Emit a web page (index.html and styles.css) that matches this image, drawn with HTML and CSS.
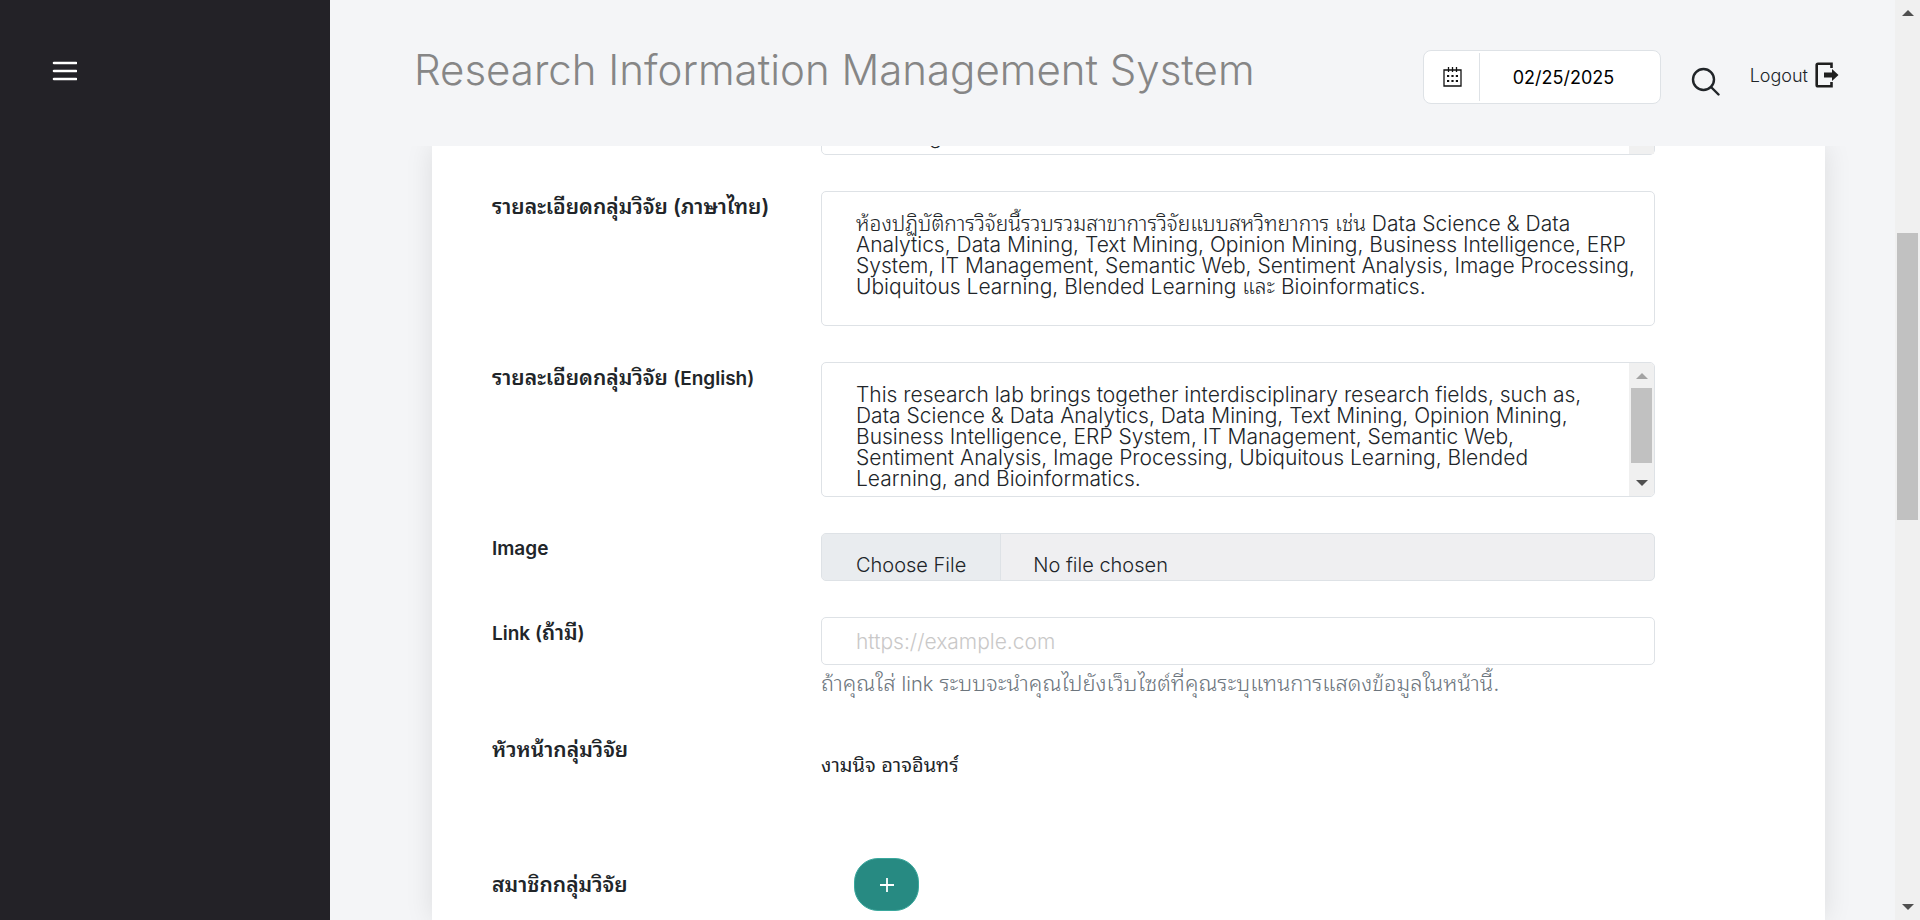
FILE: index.html
```html
<!DOCTYPE html>
<html lang="th">
<head>
<meta charset="utf-8">
<title>Research Information Management System</title>
<link rel="stylesheet" href="styles.css">
</head>
<body>
<div class="page">
  <aside class="sidebar">
    <button class="menu-toggle" type="button" aria-label="Toggle menu">
      <svg width="26" height="22" viewBox="0 0 26 22"><path d="M3 3h22M3 11h22M3 19h22" stroke="#fff" stroke-width="2.6" stroke-linecap="round"/></svg>
    </button>
  </aside>
  <div class="main">
    <header class="topbar">
      <h1 class="title">Research Information Management System</h1>
      <div class="tools">
        <div class="date">
          <span class="date-icon">
            <svg width="19" height="20" viewBox="0 0 19 20" fill="none" stroke="#111"><path d="M1 3h17v16H1zM5.500 0v5M13.500 0v5M9.500 0v5" stroke-width="1.300"/><path d="M4 9h2.200M8.400 9h2.200M12.800 9h2.200M4 14h2.200M8.400 14h2.200M12.800 14h2.200" stroke-width="2.200"/></svg>
          </span>
          <input class="date-input" type="text" value="02/25/2025" aria-label="Date">
        </div>
        <button class="search" type="button" aria-label="Search">
          <svg width="29" height="29" viewBox="0 0 29 29" fill="none" stroke="#212529" stroke-width="2.400" stroke-linecap="round"><circle cx="12.500" cy="12.500" r="10.500"/><path d="M20 20l7.500 7.500"/></svg>
        </button>
        <a class="logout" href="#">Logout
          <svg width="24" height="26" viewBox="0 0 24 26"><path d="M16.500 6V1.700H3Q1.700 1.700 1.700 3v20q0 1.300 1.300 1.300h13.500V20" fill="none" stroke="#1f1f1f" stroke-width="2.600"/><path d="M9 10.500h8V7l6.500 6-6.500 6v-3.500H9z" fill="#1f1f1f"/></svg>
        </a>
      </div>
    </header>
    <main class="content">
      <form class="card">
        <div class="clip"><textarea class="control clipped" aria-label="ชื่อกลุ่มวิจัย">Learning</textarea><span class="clip-track"></span></div>
        <div class="row">
          <label class="label thai" for="detail-th">รายละเอียดกลุ่มวิจัย (ภาษาไทย)</label>
          <div class="field"><textarea class="control area" id="detail-th">ห้องปฏิบัติการวิจัยนี้รวบรวมสาขาการวิจัยแบบสหวิทยาการ เช่น Data Science &amp; Data
Analytics, Data Mining, Text Mining, Opinion Mining, Business Intelligence, ERP
System, IT Management, Semantic Web, Sentiment Analysis, Image Processing,
Ubiquitous Learning, Blended Learning และ Bioinformatics.</textarea></div>
        </div>
        <div class="row">
          <label class="label thai" for="detail-en">รายละเอียดกลุ่มวิจัย <span class="latin">(English)</span></label>
          <div class="field"><textarea class="control area" id="detail-en">This research lab brings together interdisciplinary research fields, such as,
Data Science &amp; Data Analytics, Data Mining, Text Mining, Opinion Mining,
Business Intelligence, ERP System, IT Management, Semantic Web,
Sentiment Analysis, Image Processing, Ubiquitous Learning, Blended
Learning, and Bioinformatics.</textarea>
            <div class="scroll scroll-field"><i class="up dim"></i><i class="thumb"></i><i class="down"></i></div>
          </div>
        </div>
        <div class="row">
          <label class="label" for="image">Image</label>
          <div class="field"><input class="control file" type="file" id="image"></div>
        </div>
        <div class="row">
          <label class="label thai" for="link"><span class="latin">Link (</span>ถ้ามี<span class="latin">)</span></label>
          <div class="field"><input class="control line" type="url" id="link" placeholder="https://example.com">
            <small class="help">ถ้าคุณใส่ <span class="latin">link</span> ระบบจะนำคุณไปยังเว็บไซต์ที่คุณระบุแทนการแสดงข้อมูลในหน้านี้.</small></div>
        </div>
        <div class="row head">
          <span class="label thai">หัวหน้ากลุ่มวิจัย</span>
          <div class="field"><p class="person">งามนิจ อาจอินทร์</p></div>
        </div>
        <div class="row members">
          <span class="label thai">สมาชิกกลุ่มวิจัย</span>
          <div class="field"><button class="add" type="button" aria-label="Add member"><svg width="16" height="16" viewBox="0 0 16 16"><path d="M8 1v14M1 8h14" stroke="#fff" stroke-width="1.800"/></svg></button></div>
        </div>
      </form>
    </main>
  </div>
  <div class="scroll scroll-page"><i class="up"></i><i class="thumb"></i><i class="down"></i></div>
</div>
</body>
</html>
```
FILE: styles.css
```css
* { box-sizing: border-box; }
body {
  margin: 0;
  font-family: Inter, "Noto Sans Thai Looped", "Noto Looped Thai", Loma, Waree, Garuda, "Noto Sans Thai", sans-serif;
  color: #212529;
  background: #f4f5f7;
}
.page { display: flex; height: 100vh; overflow: hidden; }
.sidebar { flex: 0 0 330px; background: #232227; padding: 60px 51px; }
button { font: inherit; cursor: pointer; }
.menu-toggle { display: flex; padding: 0; border: 0; background: none; }
.main { flex: 1; min-width: 0; display: flex; flex-direction: column; }
.topbar {
  flex: 0 0 146px;
  display: flex;
  justify-content: space-between;
  align-items: flex-start;
  padding: 40px 56px 0 84px;
}
.title { margin: 0; font-size: 42px; line-height: 60px; font-weight: 300; color: #868686; white-space: nowrap; }
.tools { display: flex; align-items: center; padding-top: 10px; }
.date {
  display: flex;
  width: 238px;
  height: 54px;
  padding: 2px;
  background: #fff;
  border: 1px solid #dee2e6;
  border-radius: 8px;
}
.date-icon { flex: 0 0 54px; display: flex; align-items: center; justify-content: center; border-right: 1px solid #dee2e6; }
.date-input { flex: 1; min-width: 0; padding: 0 0 0 33px; border: 0; background: none; font: 400 18px Inter, sans-serif; color: #000; }
.search { display: flex; margin: 8px 30px 0 30px; padding: 0; border: 0; background: none; }
.logout { display: flex; align-items: center; gap: 7px; padding-bottom: 4px; font-size: 18px; font-weight: 300; color: #212529; text-decoration: none; }
.content { flex: 1; min-height: 0; overflow: hidden; padding: 0 70px 0 102px; }
.card {
  display: flex;
  flex-direction: column;
  gap: 36px;
  min-height: 100%;
  padding: 0 170px 0 60px;
  background: #fff;
  box-shadow: 0 0 26px rgba(0, 0, 0, .1);
}
.row { display: grid; grid-template-columns: 329px 1fr; }
.label { padding-top: 3px; font-size: 19px; line-height: 26px; font-weight: 600; }
.thai { font-size: 21px; white-space: nowrap; }
.label .latin { font-size: 19px; }
.field { position: relative; min-width: 0; }
.control {
  display: block;
  width: 100%;
  border: 1px solid #dee2e6;
  border-radius: 5px;
  background: #fff;
  color: #212529;
  font-family: inherit;
  font-size: 21px;
  line-height: 21px;
  font-weight: 300;
  resize: none;
  overflow: hidden;
}
.area { height: 135px; padding: 21px 10px 0 34px; white-space: pre; }
.clip { position: relative; display: flex; align-items: flex-end; height: 9px; margin-left: 329px; overflow: hidden; }
.clipped { flex: none; height: 60px; padding: 30px 34px 0; }
.clip-track { position: absolute; right: 1px; bottom: 1px; width: 25px; height: 8px; background: #f0f0f0; }
.file { height: 48px; padding: 0; background: #efeff1; line-height: 62px; font-size: 20px; }
.file::file-selector-button {
  height: 62px;
  margin: 0 32px 0 0;
  padding: 0 34px;
  border: 0;
  border-right: 1px solid #dee2e6;
  background: #e9ecef;
  color: #212529;
  font: inherit;
}
.line { height: 48px; padding: 0 34px; }
.line::placeholder { color: #c9c8c8; }
.help { display: block; margin-top: 4px; font-size: 22px; line-height: 28px; font-weight: 300; color: #6c757d; }
.help .latin { font-size: 20px; }
.head { height: 88px; }
.person { margin: 19px 0 0; font-size: 20px; line-height: 24px; }
.members { align-items: center; }
.members .label { padding: 0; }
.add {
  display: flex;
  align-items: center;
  justify-content: center;
  width: 65px;
  height: 53px;
  margin-left: 33px;
  border: 1px solid #3aa89d;
  border-radius: 24px;
  background: #278a82;
}
.scroll { display: flex; flex-direction: column; align-items: center; background: #f0f0f0; }
.up, .down { border: 6px solid transparent; border-top-width: 0; border-bottom: 6px solid #505050; }
.down { border-top: 6px solid #505050; border-bottom-width: 0; margin-top: auto; }
.dim { border-bottom-color: #a3a3a3; }
.thumb { width: 21px; background: #c1c1c1; }
.scroll-page { flex: 0 0 25px; padding: 10px 0; }
.scroll-page .thumb { height: 287px; margin-top: 217px; }
.scroll-field { position: absolute; top: 1px; right: 1px; bottom: 1px; width: 25px; padding: 10px 0; border-radius: 0 4px 4px 0; }
.scroll-field .thumb { height: 75px; margin-top: 9px; }
```
